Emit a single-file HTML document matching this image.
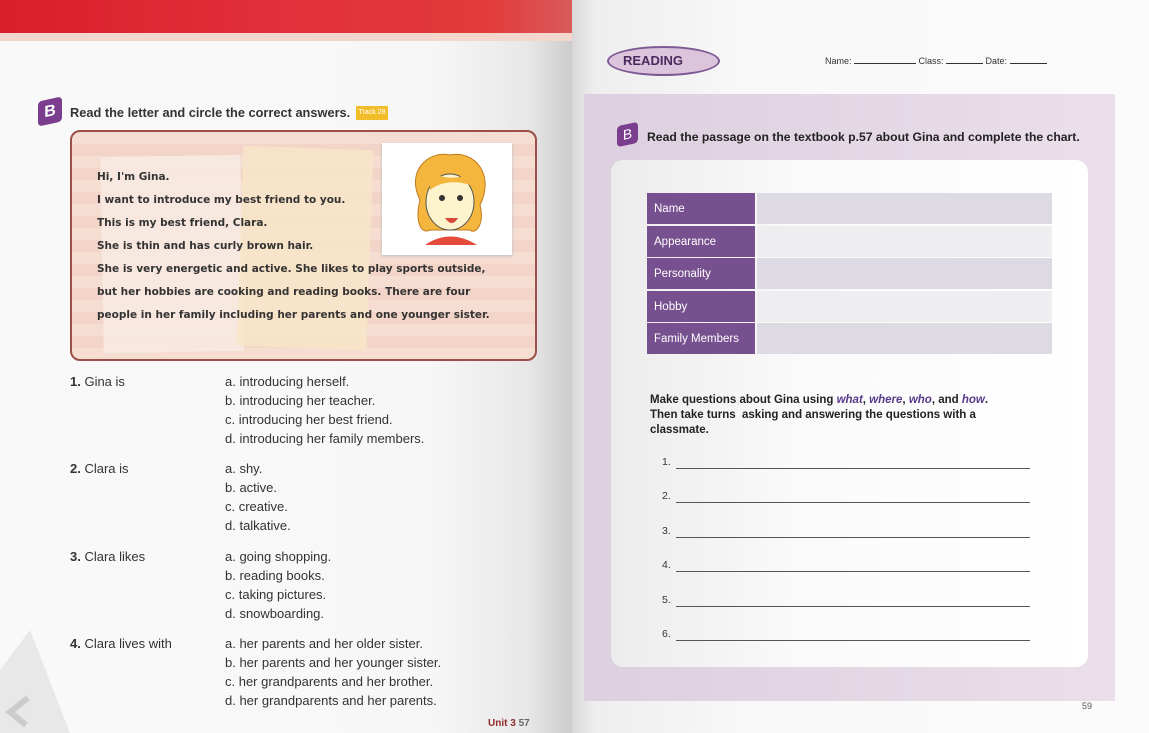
<!DOCTYPE html>
<html><head><style>
*{margin:0;padding:0;box-sizing:border-box}
body{width:1149px;height:733px;overflow:hidden;position:relative;background:#f3f3f3;font-family:"Liberation Sans",sans-serif}
.abs{position:absolute}
.left{left:0;top:0;width:572px;height:733px;background:linear-gradient(90deg,#f9f9f9 0%,#f7f7f7 75%,#e8e8e8 92%,#cccccc 100%)}
.right{left:572px;top:0;width:577px;height:733px;background:linear-gradient(90deg,#d8d8d8 0%,#eeeeee 4%,#f8f8f8 30%,#fbfbfb 100%)}
.q{font-family:"Liberation Sans",sans-serif;font-size:13px;color:#333;position:absolute;line-height:19px}
.q b{color:#333}
.lt{font-family:"DejaVu Sans",sans-serif;font-size:10.5px;font-weight:bold;color:#333;position:absolute;left:97px}
.row{position:absolute;left:647px;width:405px;height:31px}
.row .l{position:absolute;left:0;top:0;width:108px;height:31px;background:#77518f;color:#fff;font-size:11.5px;padding:10px 0 0 7px}
.row .r{position:absolute;left:110px;top:0;width:295px;height:31px}
.ln{position:absolute;left:662px;font-size:10.5px;color:#333}
.ln i{position:absolute;left:14px;top:12px;width:354px;border-top:1px solid #555}
</style></head><body>
<div class="abs left"></div>
<div class="abs right"></div>
<div class="abs" style="left:0;top:0;width:572px;height:34px;background:linear-gradient(90deg,#d81f2a,#e3303a 50%,#e23a3a 85%,#d85a5a)"></div>
<div class="abs" style="left:0;top:33px;width:572px;height:8px;background:#f3d6cc"></div>

<div class="abs" style="left:38px;top:99px;width:24px;height:25px;background:#7b3e8e;border-radius:4px;transform:skewY(-12deg);color:#fff;font-weight:bold;font-size:16px;text-align:center;line-height:25px">B</div>
<div class="abs" style="left:70px;top:105px;font-size:12.8px;font-weight:bold;color:#333">Read the letter and circle the correct answers.</div>
<div class="abs" style="left:356px;top:106px;width:32px;height:14px;background:#f2bd2a;color:#fff;font-size:7px;text-align:center;line-height:14px">Track 28</div>

<div class="abs" style="left:70px;top:130px;width:467px;height:231px;border:2px solid #9a5048;border-radius:10px;background:repeating-linear-gradient(180deg,#f6ddd2 0 12px,#f3d4c8 12px 24px)"></div>
<div class="abs" style="left:102px;top:156px;width:140px;height:196px;background:#f8ebe4;opacity:.8;transform:rotate(-1deg)"></div>
<div class="abs" style="left:240px;top:148px;width:130px;height:200px;background:#f7e6c8;opacity:.8;transform:rotate(2deg)"></div>
<div class="abs" style="left:382px;top:143px;width:130px;height:112px;background:#fff;box-shadow:0 1px 3px #bbb"></div>
<svg class="abs" style="left:400px;top:150px" width="100" height="100" viewBox="0 0 100 100">
<path d="M20 50 C5 20 30 0 50 5 C75 0 95 25 80 55 C85 75 75 85 70 80 L30 80 C20 85 15 70 20 50Z" fill="#f4b63c" stroke="#c07a20"/>
<ellipse cx="50" cy="52" rx="24" ry="28" fill="#fdf3cc" stroke="#555"/>
<path d="M30 20 C40 30 60 30 72 22 L70 35 C55 30 40 32 30 40Z" fill="#f4b63c"/>
<circle cx="42" cy="48" r="3" fill="#333"/><circle cx="60" cy="48" r="3" fill="#333"/>
<path d="M45 68 Q52 78 58 68Z" fill="#d4483a"/>
<path d="M25 95 Q50 78 77 95Z" fill="#e44b3a"/>
</svg>
<div class="lt" style="top:171px">Hi, I'm Gina.</div>
<div class="lt" style="top:194px">I want to introduce my best friend to you.</div>
<div class="lt" style="top:217px">This is my best friend, Clara.</div>
<div class="lt" style="top:240px">She is thin and has curly brown hair.</div>
<div class="lt" style="top:263px">She is very energetic and active. She likes to play sports outside,</div>
<div class="lt" style="top:286px">but her hobbies are cooking and reading books. There are four</div>
<div class="lt" style="top:309px">people in her family including her parents and one younger sister.</div>

<div class="q" style="left:70px;top:372px"><b>1.</b> Gina is</div>
<div class="q" style="left:225px;top:372px">a. introducing herself.<br>b. introducing her teacher.<br>c. introducing her best friend.<br>d. introducing her family members.</div>
<div class="q" style="left:70px;top:459px"><b>2.</b> Clara is</div>
<div class="q" style="left:225px;top:459px">a. shy.<br>b. active.<br>c. creative.<br>d. talkative.</div>
<div class="q" style="left:70px;top:547px"><b>3.</b> Clara likes</div>
<div class="q" style="left:225px;top:547px">a. going shopping.<br>b. reading books.<br>c. taking pictures.<br>d. snowboarding.</div>
<div class="q" style="left:70px;top:634px"><b>4.</b> Clara lives with</div>
<div class="q" style="left:225px;top:634px">a. her parents and her older sister.<br>b. her parents and her younger sister.<br>c. her grandparents and her brother.<br>d. her grandparents and her parents.</div>
<div class="abs" style="left:488px;top:718px;font-size:10px;font-weight:bold;color:#8c2a2a">Unit 3 <span style="color:#666">57</span></div>
<svg class="abs" style="left:0;top:630px" width="70" height="103"><path d="M0 40 L30 0 L70 103 L0 103Z" fill="#e8e8e8"/><path d="M28 68 L10 82 L26 95" stroke="#ccc" stroke-width="6" fill="none"/></svg>

<div class="abs" style="left:607px;top:46px;width:113px;height:30px;border:2px solid #7e5a94;border-radius:50%;background:#dcc4dc"></div>
<div class="abs" style="left:623px;top:53px;font-size:13px;font-weight:bold;color:#4a2a5e">READING</div>
<div class="abs" style="left:825px;top:56px;font-size:9px;color:#333">Name: <span style="display:inline-block;width:62px;border-bottom:1px solid #333"></span> Class: <span style="display:inline-block;width:37px;border-bottom:1px solid #333"></span> Date: <span style="display:inline-block;width:37px;border-bottom:1px solid #333"></span></div>

<div class="abs" style="left:584px;top:94px;width:531px;height:607px;background:linear-gradient(90deg,#dccfdf,#eadfea)"></div>
<div class="abs" style="left:617px;top:124px;width:21px;height:21px;background:#7b3e8e;border-radius:4px;transform:skewY(-12deg);color:#fff;font-size:14px;text-align:center;line-height:21px">B</div>
<div class="abs" style="left:647px;top:130px;font-size:12.2px;font-weight:bold;color:#222">Read the passage on the textbook p.57 about Gina and complete the chart.</div>
<div class="abs" style="left:611px;top:160px;width:477px;height:507px;border-radius:12px;background:linear-gradient(90deg,#ececec,#fafafa 40%,#fff)"></div>
<div class="row" style="top:193px"><div class="l">Name</div><div class="r" style="background:#dedae3"></div></div>
<div class="row" style="top:226px"><div class="l">Appearance</div><div class="r" style="background:#eeedf0"></div></div>
<div class="row" style="top:258px"><div class="l">Personality</div><div class="r" style="background:#dedae3"></div></div>
<div class="row" style="top:291px"><div class="l">Hobby</div><div class="r" style="background:#eeedf0"></div></div>
<div class="row" style="top:323px"><div class="l">Family Members</div><div class="r" style="background:#dedae3"></div></div>

<div class="abs" style="left:650px;top:393px;font-size:11.5px;font-weight:bold;color:#222;line-height:15px">Make questions about Gina using <i style="color:#5a3a8a">what</i>, <i style="color:#5a3a8a">where</i>, <i style="color:#5a3a8a">who</i>, and <i style="color:#5a3a8a">how</i>.<br>Then take turns &nbsp;asking and answering the questions with a<br>classmate.</div>
<div class="ln" style="top:456px">1.<i></i></div>
<div class="ln" style="top:490px">2.<i></i></div>
<div class="ln" style="top:525px">3.<i></i></div>
<div class="ln" style="top:559px">4.<i></i></div>
<div class="ln" style="top:594px">5.<i></i></div>
<div class="ln" style="top:628px">6.<i></i></div>
<div class="abs" style="left:1082px;top:701px;font-size:9px;color:#555">59</div>
</body></html>
